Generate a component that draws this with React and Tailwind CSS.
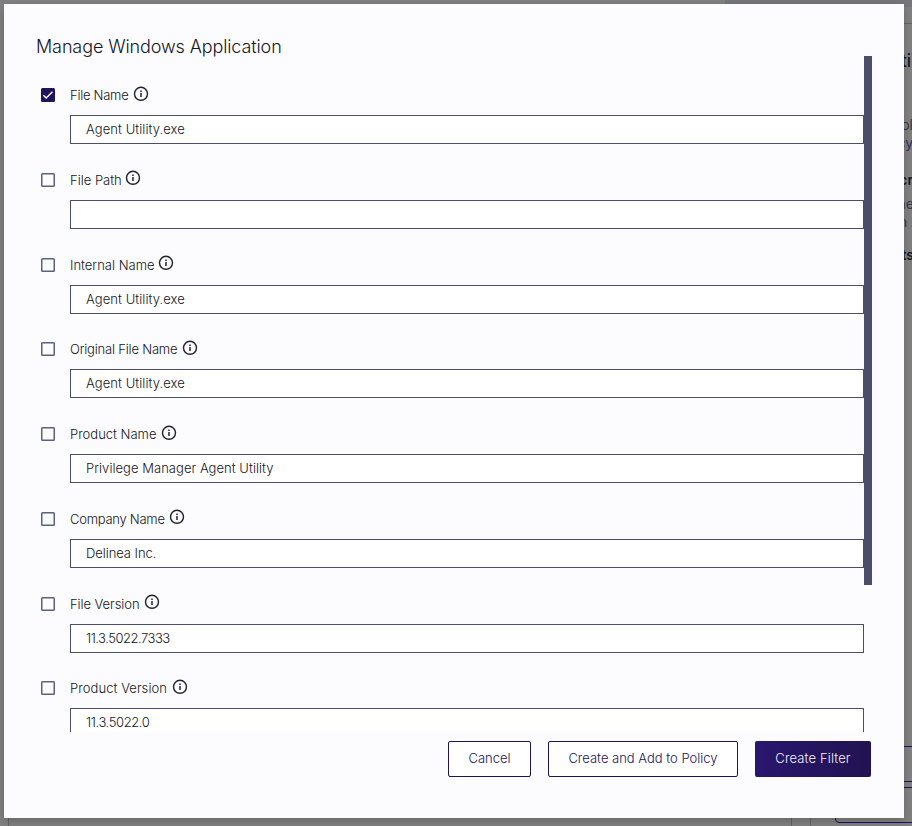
import React from "react";

const fields = [
  { label: "File Name", value: "Agent Utility.exe", checked: true, w: "w-[58px]", ls: "tracking-[-0.02em]", vls: "tracking-[0.005em]" },
  { label: "File Path", value: "", w: "w-[50px]", ls: "tracking-[0em]", vls: "" },
  { label: "Internal Name", value: "Agent Utility.exe", w: "w-[83px]", ls: "tracking-[0em]", vls: "tracking-[0.005em]" },
  { label: "Original File Name", value: "Agent Utility.exe", w: "w-[107px]", ls: "tracking-[-0.015em]", vls: "tracking-[0.005em]" },
  { label: "Product Name", value: "Privilege Manager Agent Utility", w: "w-[86px]", ls: "tracking-[0em]", vls: "tracking-[0.003em]" },
  { label: "Company Name", value: "Delinea Inc.", w: "w-[94px]", ls: "tracking-[-0.02em]", vls: "tracking-[-0.005em]" },
  { label: "File Version", value: "11.3.5022.7333", w: "w-[69px]", ls: "tracking-[-0.005em]", vls: "tracking-[-0.037em]" },
  { label: "Product Version", value: "11.3.5022.0", w: "w-[97px]", ls: "tracking-[0.005em]", vls: "tracking-[-0.03em]" },
];

function InfoIcon() {
  return (
    <svg className="-mt-[3px] ml-[5px] size-4 shrink-0" viewBox="0 0 16 16" fill="none" stroke="#20202f">
      <circle cx="8" cy="7.8" r="6.5" strokeWidth="1.4" />
      <path d="M8 7v4M8 4.5v1.4" strokeWidth="1.5" />
    </svg>
  );
}

function Checkbox({ checked }) {
  return (
    <svg className="mr-[14px] size-4 shrink-0" viewBox="0 0 16 16" fill="none">
      <rect x="1.75" y="1.75" width="12.5" height="12.5" rx="0.8" stroke={checked ? "#21125c" : "#5c607b"} strokeWidth="1.5" fill={checked ? "#21125c" : "none"} />
      {checked && <path d="M3.4 8.3l2.8 2.7 6.3-6.2" stroke="#fff" strokeWidth="1.4" />}
    </svg>
  );
}

function Field({ label, value, checked, w, ls, vls }) {
  return (
    <div className="h-[84.75px] shrink-0">
      <div className="flex h-6 items-center pl-1">
        <Checkbox checked={checked} />
        <span className={`${w} ${ls} whitespace-nowrap text-[13px] leading-6`}>{label}</span>
        <InfoIcon />
      </div>
      <div className={`${vls} mt-2 ml-[34px] flex h-[29px] w-[794px] items-center border border-[#4b4e68] bg-white px-[15px] text-[13px] leading-[27px]`}>
        {value}
      </div>
    </div>
  );
}

function Page() {
  return (
    <div className="flex h-[826px] w-[912px] flex-col overflow-hidden bg-[#808080] font-normal">
      <div className="flex h-[7px] shrink-0 justify-end">
        <div className="w-[187px] bg-[#747679]" />
      </div>
      <div className="flex h-[819px] shrink-0 pt-4 pl-2">
        <div className="w-[784px] shrink-0 border-x border-t border-[#646464]" />
        <div className="ml-[18px] w-[130px] shrink-0 border-t border-l border-[#646464] pl-6 text-[#39394a]">
          <div className="mt-[25px] w-[76px] text-right text-[17px] leading-6 font-medium text-[#17171f]">ti</div>
          <div className="mt-[43px] w-[78px] text-right text-sm leading-[18px]">ol</div>
          <div className="w-[78px] text-right text-sm leading-[18px] text-[#30305c]">cy</div>
          <div className="mt-[19px] w-[78px] text-right text-sm leading-[18px] font-semibold text-[#17171f]">cr</div>
          <div className="mt-[6px] w-[79px] text-right text-sm leading-[18px]">ne</div>
          <div className="w-[79px] text-right text-sm leading-[18px] tracking-[-0.03em]">n .</div>
          <div className="mt-[15px] w-[79px] text-right text-sm leading-[18px] font-semibold text-[#17171f]">ts</div>
          <div className="mt-[482px] h-9 w-[110px] rounded-sm border border-[#21125c]" />
          <div className="mt-[5px] h-9 w-[110px] rounded-sm border border-[#21125c]" />
        </div>
      </div>
    </div>
  );
}

export default function App() {
  return (
    <div className="relative h-[826px] w-[912px] overflow-hidden font-[Inter,sans-serif] text-[#151522]">
      <Page />
      <div className="absolute top-1 left-1 flex h-[814px] w-[900px] flex-col bg-[#fcfcfe] pt-[31px] pl-8 font-light shadow-[0_3px_8px_rgba(0,0,0,0.2)]">
        <h1 className="h-[21px] text-[18px] leading-[24px] font-light tracking-[-0.006em] whitespace-nowrap">Manage Windows Application</h1>
        <div className="flex h-[676px] w-[836px] shrink-0 overflow-hidden">
          <div className="flex h-[676px] w-[828px] shrink-0 flex-col overflow-hidden pt-[27px]">
            {fields.map((f) => (
              <Field key={f.label} {...f} />
            ))}
          </div>
          <div className="h-[529px] w-2 shrink-0 bg-[#4b4e68]" />
        </div>
        <div className="mt-[9px] flex h-9 w-[835px] shrink-0 justify-end gap-[17px] text-[13px] font-light text-[#21125c]">
          <button className="w-[83px] rounded-[2px] border border-[#21125c] bg-white">Cancel</button>
          <button className="w-[190px] rounded-[2px] border border-[#21125c] bg-white whitespace-nowrap">Create and Add to Policy</button>
          <button className="w-[116px] rounded-[2px] bg-linear-to-r from-[#29166f] to-[#211351] tracking-[0.01em] text-[#f4f2fb] whitespace-nowrap">Create Filter</button>
        </div>
      </div>
    </div>
  );
}
